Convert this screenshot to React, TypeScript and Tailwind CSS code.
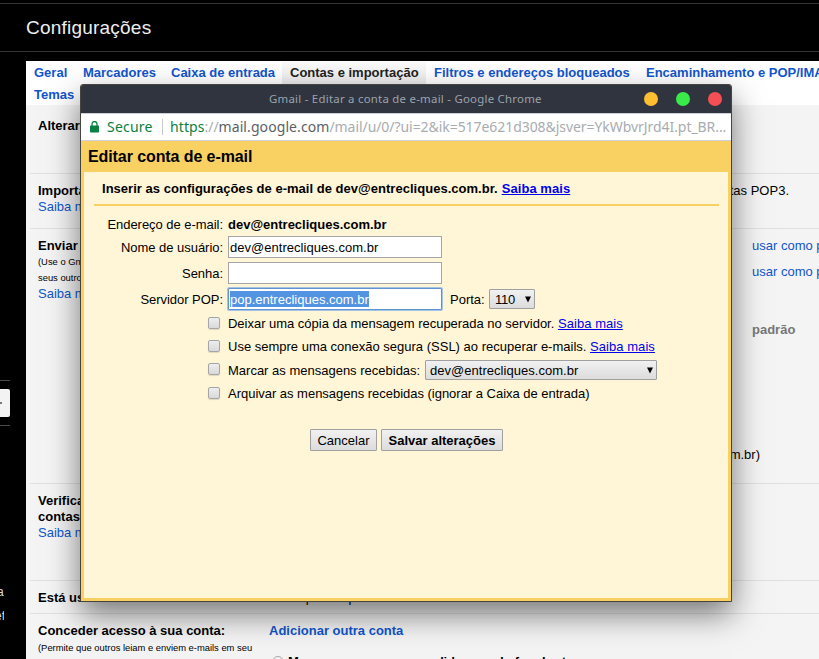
import React from "react";

const tabs = [
  { label: "Geral", x: "w-[49px]" },
  { label: "Marcadores", x: "w-[88px]" },
  { label: "Caixa de entrada", x: "w-[119px]" },
  { label: "Contas e importação", x: "w-[144px]", active: true },
  { label: "Filtros e endereços bloqueados", x: "w-[212px]" },
  { label: "Encaminhamento e POP/IMAP", x: "w-[220px]" },
];

function Row({ className, label, children }: { className: string; label: React.ReactNode; children?: React.ReactNode }) {
  return (
    <div className={`ml-1 flex shrink-0 border-b border-[#e0e0e0] pl-2 ${className}`}>
      <div className="w-[231px] shrink-0 whitespace-nowrap">{label}</div>
      <div className="min-w-0 grow whitespace-nowrap">{children}</div>
    </div>
  );
}

function Link({ children }: { children: React.ReactNode }) {
  return <span className="text-[#1155cc]">{children}</span>;
}

function Field({ label, className, children }: { label: string; className: string; children: React.ReactNode }) {
  return (
    <div className={`flex shrink-0 items-center ${className}`}>
      <div className="mr-[5px] w-[139px] shrink-0 pt-px text-right tracking-[-0.04px]">{label}</div>
      {children}
    </div>
  );
}

function Check({ className, children }: { className: string; children: React.ReactNode }) {
  return (
    <div className={`flex shrink-0 items-center pl-[124px] ${className}`}>
      <div className="-mt-0.5 mr-2 size-3 shrink-0 rounded-[2px] border border-[#a5a5a8] bg-linear-to-b from-[#eeeeee] to-[#d9d9dc] shadow-[0_1px_1px_rgba(0,0,0,0.12)]" />
      {children}
    </div>
  );
}

function Arrow() {
  return (
    <svg width="6" height="7" viewBox="0 0 6 7" className="shrink-0">
      <path d="M0 0.5h6L3 6.5z" fill="#000" />
    </svg>
  );
}

const control = "rounded-[1px] border border-[#a0a0a0] bg-linear-to-b from-[#f1f1f1] to-[#dcdcdc]";

function Help() {
  return <span className="tracking-[0.06px] text-[#0000ee] underline">Saiba mais</span>;
}

function Popup() {
  return (
    <div className="absolute top-[84px] left-[80px] flex h-[518px] w-[652px] flex-col overflow-hidden rounded-t-[3px] border border-[#45443f] bg-[#f9d163]">
      <div className="flex h-[28px] shrink-0 items-center bg-[#2f343f] font-['Noto_Sans',sans-serif] text-[11.4px] text-[#9ba3ad]">
        <div className="w-[648px] pl-[188px] tracking-[0.255px] whitespace-nowrap">Gmail - Editar a conta de e-mail - Google Chrome</div>
        <div className="mr-[9px] flex gap-[18px]">
          <i className="size-[14px] rounded-full bg-[#fdbe31]" />
          <i className="size-[14px] rounded-full bg-[#39ea49]" />
          <i className="size-[14px] rounded-full bg-[#f44f55]" />
        </div>
      </div>
      <div className="flex h-[28px] shrink-0 items-center border-y border-[#cfcfdc] bg-white pl-[9px] font-['Noto_Sans',sans-serif] text-[14px] whitespace-nowrap text-[#a9acaf]">
        <svg width="9" height="12" viewBox="0 0 9 12" className="shrink-0">
          <path d="M2 5V3a2.5 2.5 0 0 1 5 0v2" fill="none" stroke="#0b8043" strokeWidth="1.3" />
          <rect y="4.5" width="9" height="7" rx="0.7" fill="#0b8043" />
        </svg>
        <span className="ml-2 w-[55px] tracking-[0.2px] text-[#0b8043]">Secure</span>
        <span className="mr-[7px] h-4 w-px bg-[#c9c9c9]" />
        <span className="tracking-[-0.06px]">
          <span className="tracking-[0.1px] text-[#0b8043]">https</span>://<span className="tracking-[0.08px] text-[#5c5f63]">mail.google.com</span>/mail/u/0/?ui=2&amp;ik=517e621d308&amp;jsver=YkWbvrJrd4I.pt_BR...
        </span>
      </div>
      <div className="flex h-[31px] shrink-0 items-center pt-px pl-[7px] text-[16px] tracking-[-0.09px] font-bold">Editar conta de e-mail</div>
      <div className="mx-[3px] mb-[3px] flex grow flex-col bg-[#fff6d8] whitespace-nowrap">
        <div className="mr-[9px] ml-[10px] flex h-[34px] shrink-0 items-center border-b-2 border-[#f9d163] pt-0.5 pl-2 font-bold">
          <span className="mr-1 tracking-[0.025px]">Inserir as configurações de e-mail de dev@entrecliques.com.br.</span>
          <Help />
        </div>
        <Field label="Endereço de e-mail:" className="mt-[7px] mb-px h-[22px]"><b className="pt-px">dev@entrecliques.com.br</b></Field>
        <Field label="Nome de usuário:" className="h-[22px]">
          <div className="flex h-[22px] w-[214px] items-center border border-[#a5a5a5] bg-white pt-px pl-[1px] tracking-[0.03px]">dev@entrecliques.com.br</div>
        </Field>
        <Field label="Senha:" className="mt-1 h-[22px]">
          <div className="h-[22px] w-[214px] border border-[#a5a5a5] bg-white" />
        </Field>
        <Field label="Servidor POP:" className="mt-1 h-[22px]">
          <div className="flex h-[22px] w-[214px] items-center rounded-[1px] border border-[#5f93d1] bg-white pl-[1px] shadow-[0_0_0_1px_#a6c3e4]">
            <span className="flex h-[16px] items-center bg-[#5294e2] pt-px text-white">pop.entrecliques.com.br</span>
          </div>
          <span className="ml-2 w-[39px] pt-px">Porta:</span>
          <div className={`flex h-5 w-[46px] items-center justify-between pr-[3px] pl-[5px] ${control}`}><span className="pt-px tracking-[-0.3px]">110</span><Arrow /></div>
        </Field>
        <Check className="mt-0.5 h-[23px]"><span className="tracking-[-0.02px]">Deixar uma cópia da mensagem recuperada no servidor.&nbsp;<Help /></span></Check>
        <Check className="h-[23px]">Use sempre uma conexão segura (SSL) ao recuperar e-mails.&nbsp;<Help /></Check>
        <Check className="h-[24px]">
          <span className="w-[197px] pt-px">Marcar as mensagens recebidas:</span>
          <div className={`flex h-5 w-[232px] items-center justify-between pr-[3px] pl-1 ${control}`}><span className="pt-px tracking-[0.03px]">dev@entrecliques.com.br</span><Arrow /></div>
        </Check>
        <Check className="h-[23px]"><span className="tracking-[-0.02px]">Arquivar as mensagens recebidas (ignorar a Caixa de entrada)</span></Check>
        <div className="mt-[24px] ml-[226px] flex gap-1">
          <button className={`h-[22px] w-[67px] pt-px ${control}`}>Cancelar</button>
          <button className={`h-[22px] w-[122px] pt-px font-bold ${control}`}>Salvar alterações</button>
        </div>
      </div>
    </div>
  );
}

export default function App() {
  return (
    <div className="relative flex h-[659px] w-[819px] flex-col overflow-hidden bg-black font-['Liberation_Sans',Arial,sans-serif] text-[13px] leading-4 text-black">
      <header className="mt-[3px] flex h-[49px] shrink-0 items-center border-y border-[#333] pl-[26px] text-[19px] tracking-[0.22px] text-[#eee]">Configurações</header>
      <div className="flex grow">
        <aside className="flex w-[26px] shrink-0 flex-col overflow-hidden pt-[328px] text-[12px] text-[#ddd]">
          <div className="flex h-[46px] w-[10px] items-center border-y border-[#4a4a4a]">
            <div className="flex h-[28px] w-[10px] items-center rounded-r-[2px] bg-[#f3f3f3]"><i className="h-[2px] w-[2px] bg-[#777]" /></div>
          </div>
          <div className="mt-[158px] w-1 overflow-hidden"><div className="-ml-[3px]">a</div></div>
          <div className="mt-2 w-1 overflow-hidden"><div className="-ml-[5px]">ef</div></div>
        </aside>
        <main className="mt-[9px] flex w-[793px] flex-col overflow-hidden bg-[#f4f4f4]">
          <nav className="h-[44px] shrink-0 bg-white pt-px font-bold text-[#1155cc]">
            <div className="flex whitespace-nowrap">
              {tabs.map((t) => (
                <div key={t.label} className={`flex h-[22px] shrink-0 items-center pl-2 ${t.x} ${t.active ? "bg-linear-to-b from-[#fafafa] to-[#ebebeb] text-[#222]" : ""}`}>{t.label}</div>
              ))}
            </div>
            <div className="flex h-[21px] items-center pl-2">Temas</div>
          </nav>
          <Row className="h-[69px] pt-[13px]" label={<b>Alterar</b>} />
          <Row className="h-[55px] pt-[9px]" label={<><b>Importar</b><br /><Link>Saiba mais</Link></>}>
            <div className="w-[520px] text-right">contas POP3.</div>
          </Row>
          <Row className="h-[255px] pt-[9px]" label={<><b>Enviar</b><div className="text-[9.4px]">(Use o Gmail para</div><div className="text-[9.4px]">seus outros</div><Link>Saiba mais</Link></>}>
            <div className="pl-[483px]">
              <Link>usar como padrão</Link>
              <div className="mt-[10px]"><Link>usar como padrão</Link></div>
              <b className="mt-[42px] block text-[#777]">padrão</b>
            </div>
            <div className="mt-[109px] w-[491px] text-right">com.br)</div>
          </Row>
          <Row className="h-[97px] pt-[9px]" label={<><b>Verificar<br />contas:</b><br /><Link>Saiba mais</Link></>} />
          <Row className="h-[33px] pt-[9px]" label={<b>Está usando o Gmail no trabalho?</b>}>As empresas podem melhorar o e-mail com o G Suite. Saiba mais</Row>
          <Row className="h-[80px] pt-[9px]" label={<><b>Conceder acesso à sua conta:</b><div className="mt-px text-[9.4px]">(Permite que outros leiam e enviem e-mails em seu</div></>}>
            <b className="text-[#1155cc]">Adicionar outra conta</b>
            <div className="mt-[15px] flex items-center font-bold tracking-[-0.17px]"><i className="mr-1 ml-[3px] size-3 rounded-full border border-[#aaa]" />Marcar a conversa como lida quando for aberta</div>
          </Row>
        </main>
      </div>
      <div className="pointer-events-none absolute top-[94px] left-[86px] h-[504px] w-[640px] shadow-[0_10px_30px_6px_rgba(0,0,0,0.52)]" />
      <Popup />
    </div>
  );
}
